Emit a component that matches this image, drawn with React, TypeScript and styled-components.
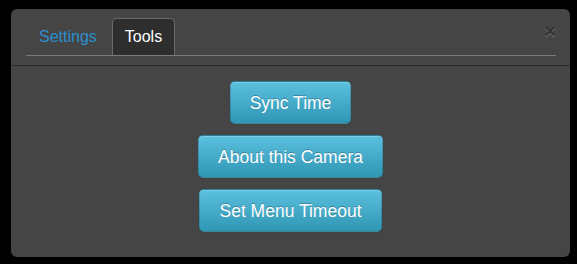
import React from "react";
import styled, { createGlobalStyle } from "styled-components";

const GlobalStyle = createGlobalStyle`
    html, body {
        margin: 0;
        padding: 0;
        background: #000;
        font-family: "Liberation Sans", Arial, sans-serif;
    }
`;

const PageSC = styled.div`
    width: 577px;
    height: 264px;
    padding: 9px 7px 7px 11px;
    box-sizing: border-box;
    background: #000;
`;

const PanelSC = styled.div`
    height: 100%;
    background: #454545;
    border-radius: 6px;
    display: flex;
    flex-direction: column;
`;

const HeaderSC = styled.div`
    position: relative;
    padding: 9px 14px 9px 15px;
    border-bottom: 1px solid #2b2b2b;
`;

const TabsSC = styled.div`
    display: flex;
    align-items: flex-end;
    height: 37px;
    border-bottom: 1px solid #7a7a7a;
    padding-left: 0;
`;

const TabSC = styled.div<{ $active?: boolean }>`
    height: 37px;
    box-sizing: border-box;
    padding: 0 12px;
    margin-right: 2px;
    display: flex;
    align-items: center;
    font-size: 16px;
    border-radius: 5px 5px 0 0;
    border: 1px solid ${(p) => (p.$active ? "#6a6a6a" : "transparent")};
    border-bottom: none;
    background: ${(p) => (p.$active ? "#2e2e2e" : "transparent")};
    color: ${(p) => (p.$active ? "#ffffff" : "#2a8fd0")};
    cursor: pointer;
`;

const CloseSC = styled.div`
    position: absolute;
    top: 12px;
    right: 14px;
    font-size: 20px;
    font-weight: bold;
    line-height: 20px;
    color: #000;
    text-shadow: 0 1px 0 #fff;
    opacity: 0.25;
    cursor: pointer;
`;

const BodySC = styled.div`
    display: flex;
    flex-direction: column;
    align-items: center;
    gap: 11px;
    padding-top: 15px;
`;

const ButtonSC = styled.button`
    font-family: "Liberation Sans", Arial, sans-serif;
    font-size: 17.5px;
    line-height: 20px;
    height: 43px;
    padding: 0 19px;
    color: #fff;
    text-shadow: 0 -1px 0 rgba(0, 0, 0, 0.25);
    background-image: linear-gradient(to bottom, #5bc0de, #2f96b4);
    border: 1px solid rgba(0, 0, 0, 0.15);
    border-bottom-color: rgba(0, 0, 0, 0.3);
    border-radius: 5px;
    box-shadow: inset 0 1px 0 rgba(255, 255, 255, 0.2), 0 1px 2px rgba(0, 0, 0, 0.05);
    cursor: pointer;
`;

export default function App() {
    return (
        <PageSC>
            <GlobalStyle />
            <PanelSC>
                <HeaderSC>
                    <TabsSC>
                        <TabSC>Settings</TabSC>
                        <TabSC $active>Tools</TabSC>
                    </TabsSC>
                    <CloseSC>×</CloseSC>
                </HeaderSC>
                <BodySC>
                    <ButtonSC>Sync Time</ButtonSC>
                    <ButtonSC>About this Camera</ButtonSC>
                    <ButtonSC>Set Menu Timeout</ButtonSC>
                </BodySC>
            </PanelSC>
        </PageSC>
    );
}
